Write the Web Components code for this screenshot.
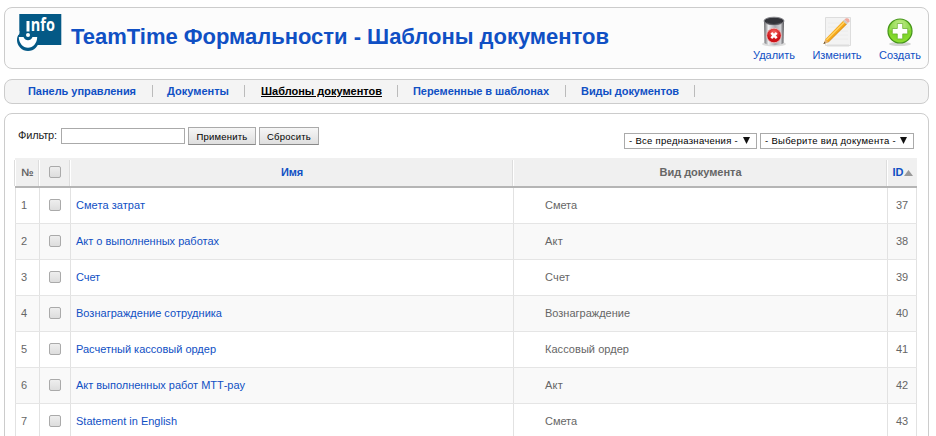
<!DOCTYPE html>
<html lang="ru"><head><meta charset="utf-8"><title>TeamTime</title>
<style>html,body{margin:0;height:436px;overflow:hidden;background:#fff}body{font:11px "Liberation Sans",Arial,sans-serif;color:#666}</style></head>
<body><team-app></team-app>
<script>
const define=(name,html,setup)=>customElements.define(name,class extends HTMLElement{
  connectedCallback(){if(this.shadowRoot)return;this.attachShadow({mode:'open'}).innerHTML=typeof html==='function'?html(this):html;if(setup)setup(this)}
});
// Single-line label whose tracking adapts to the width given in "w".
define('fit-label','<style>:host{display:block;white-space:nowrap;flex:none}span{display:inline-block;text-decoration:var(--line,none)}</style><span><slot></slot></span>',el=>{
  const w=+el.getAttribute('w'),s=el.shadowRoot.querySelector('span'),n=el.textContent.length;
  el.style.width=w+'px';
  s.style.letterSpacing=((w-s.getBoundingClientRect().width)/n)+'px';
});
define('info-logo',`<style>:host{display:block;flex:none;width:46px;height:38px}svg{display:block;overflow:visible}text{font:bold 17px "Open Sans","Noto Sans",sans-serif;fill:#fff}</style>
<svg width="46" height="38" viewBox="0 0 46 38"><path d="M3.300 0h42v31h-42z" fill="#045986"/><circle cx="12" cy="26" r="11" fill="#045986"/><path d="M0 17h3.300v3L0 23z" fill="#fcfcfc"/><path d="M2.800 23h4.700q1.500 3.200 4.500 3.200t4.500-3.200h4.700c0 6-4.200 10.800-9.200 10.800S2.800 29 2.800 23" fill="#fff"/><circle cx="12" cy="21" r="2" fill="#fff"/><path d="M10.500 7h3v10.500h-3z" fill="#fff"/><text transform="translate(14.800 16.500) scale(.85 1)">nfo</text></svg>`);
const icons={
trash:`<defs><linearGradient id="m"><stop stop-color="#656568"/><stop offset=".22" stop-color="#eeeef0"/><stop offset=".55" stop-color="#aaaab0"/><stop offset=".82" stop-color="#d4d4d8"/><stop offset="1" stop-color="#4f4f53"/></linearGradient><radialGradient id="r" cy=".3"><stop stop-color="#f86a64"/><stop offset="1" stop-color="#cc1218"/></radialGradient></defs><ellipse cx="16" cy="28" rx="12" ry="2.500" fill="#ddd"/><path d="M6 4h20l-.5 23c-3 3-16 3-19 0z" fill="url(#m)"/><ellipse cx="16" cy="5" rx="10" ry="3.800" fill="#33343a" stroke="#8b8b90"/><path d="M8 6q8 4 16 0-2 3-8 3t-8-3" fill="#56565c"/><circle cx="16" cy="19.500" r="7.300" fill="url(#r)" stroke="#f3c7c7" stroke-width=".8"/><path d="m13.300 16.800 5.400 5.400m0-5.400-5.400 5.400" stroke="#fff" stroke-width="2.500"/>`,
edit:`<path d="M4.500 1.500h25v28h-25z" fill="#f3f3f3" stroke="#ddd"/><path d="M6 28.500h22v2H6z" fill="#ddd"/><path d="M7 7h20M7 11h20M7 15h20M7 19h20M7 23h20" stroke="#ececec"/><path d="m2.500 28 2-5L22.500 4.500l3.500 3.500L7.500 26z" fill="#f6a81a"/><path d="m5.500 24 18-18" stroke="#ffd365" stroke-width="1.400"/><path d="m7 26.500 18.500-18.500" stroke="#c57915" stroke-width=".6"/><path d="m2.500 28 2-4.500 2.500 2.500z" fill="#dfb27d"/><path d="m2.500 28 .9-2 1.100 1z" fill="#333"/><path d="m22 5 1.500-1.500 3.500 3.500-1.500 1.500z" fill="#ccc"/><path d="m23.500 3.500 1.500-1.200q3.500-.8 3.500 3L27 7z" fill="#f0aa9e"/>`,
add:`<defs><radialGradient id="g" cy=".25" r=".75"><stop stop-color="#b9eb73"/><stop offset=".5" stop-color="#79d12a"/><stop offset="1" stop-color="#8ee031"/></radialGradient></defs><ellipse cx="16" cy="28" rx="11" ry="2" fill="#d3d5d2"/><circle cx="16" cy="15" r="12" fill="url(#g)" stroke="#45941b" stroke-width="1.200"/><path d="M5.500 14a10.500 10.500 0 0 1 21 0q-10 4-21 0" fill="#fff" opacity=".2"/><path d="M13.300 7.500h5.400v5h5v5.400h-5v5h-5.400v-5h-5v-5.400h5z" fill="#fff" stroke="#62ad27" stroke-width=".7"/>`};
define('tool-button',el=>`<style>:host{display:flex;flex-direction:column;align-items:center;color:#1050c4}svg{display:block}</style><svg width="32" height="32">${icons[el.getAttribute('icon')]}</svg><fit-label w="${el.getAttribute('w')}">${el.getAttribute('label')}</fit-label>`);
define('app-header',`<style>:host{display:flex;box-sizing:border-box;height:62px;border:1px solid #ccc;border-radius:8px;background:#fcfcfc;padding:6px 7px 0 11px}
.title{font:bold 22px/28px "Liberation Sans";color:#1050c4;margin:9px auto 0 9px}.tools{display:flex;gap:17.500px;padding-top:2px;line-height:14px}</style>
<info-logo></info-logo><fit-label class="title" w="538">TeamTime Формальности - Шаблоны документов</fit-label>
<div class="tools"><tool-button icon="trash" w="42" label="Удалить"></tool-button><tool-button icon="edit" w="49" label="Изменить"></tool-button><tool-button icon="add" w="42" label="Создать"></tool-button></div>`);
define('app-menu',`<style>:host{display:flex;align-items:center;box-sizing:border-box;height:25px;border:1px solid #ccc;border-radius:8px;background:#f4f4f4;padding:0 0 1px 23px;font-weight:bold;color:#1050c4}
i{width:1px;height:12px;background:#bbb;margin:0 15px 0 16px;flex:none}.on{color:#000;--line:underline}.on+i,.d+i{margin-right:15px;margin-left:15px}.p+i{margin-right:14px}.d+i{margin-right:16px}</style>
<fit-label class="p" w="108">Панель управления</fit-label><i></i><fit-label class="d" w="62">Документы</fit-label><i></i><fit-label class="on" w="121">Шаблоны документов</fit-label><i></i><fit-label w="136">Переменные в шаблонах</fit-label><i></i><fit-label class="d" w="98">Виды документов</fit-label><i></i>`);
define('push-button',`<style>:host{display:flex;align-items:center;justify-content:center;box-sizing:border-box;width:var(--w);height:18px;border:1px solid #aaa;border-bottom-color:#888;background:linear-gradient(#f6f6f6,#dedede);color:#000;font-size:9.500px;margin-left:3px}</style><slot></slot>`);
define('drop-down',`<style>:host{display:flex;align-items:center;justify-content:space-between;box-sizing:border-box;width:var(--w);height:16px;border:1px solid #aaa;background:#fff;color:#000;font-size:9.500px;padding:0 6px 1px 4px}svg{display:block}</style><slot></slot><svg width="7" height="7"><path d="M0 0h7L3.500 7z" fill="#111"/></svg>`);
define('filter-bar',`<style>:host{display:flex;height:44px;box-sizing:border-box;padding:13px 3px 0 3px;color:#222}.q{box-sizing:border-box;width:124px;height:16px;border:1px solid #aaa;margin:1px 0 0 4px;background:#fff}.f{margin-top:2px}.s{display:flex;gap:3px;margin:6px 0 0 auto}</style>
<fit-label class="f" w="39">Фильтр:</fit-label><div class="q"></div><push-button style="--w:68px"><fit-label w="51">Применить</fit-label></push-button><push-button style="--w:60px"><fit-label w="44">Сбросить</fit-label></push-button>
<div class="s"><drop-down style="--w:133px"><fit-label w="109">- Все предназначения -</fit-label></drop-down><drop-down style="--w:154px"><fit-label w="131">- Выберите вид документа -</fit-label></drop-down></div>`);
define('check-box',`<style>:host{display:block;box-sizing:border-box;width:12px;height:12px;border:1px solid #aaa;border-radius:2px;background:linear-gradient(#eee,#ddd)}</style>`);
const rows=[['Смета затрат',69,'Смета',32],['Акт о выполненных работах',143,'Акт',18],['Счет',24,'Счет',25],['Вознаграждение сотрудника',146,'Вознаграждение',85],['Расчетный кассовый ордер',140,'Кассовый ордер',84],['Акт выполненных работ МТТ-pay',169,'Акт',18],['Statement in English',101,'Смета',32]];
const grid='display:grid;grid-template-columns:24px 31px 443px 374px 30px;box-sizing:border-box;';
define('table-head',`<style>:host{${grid}height:30px;background:#f0f0f0;border-bottom:2px solid #b5b5b5;font-weight:bold}div{display:flex;align-items:center;justify-content:center;border-left:1px solid #fff;margin-top:2px;padding-bottom:2px;box-shadow:-1px 0 #ddd}div:first-child{box-shadow:none;border-color:#e5e5e5}.b{color:#1050c4}svg{flex:none;margin-top:2px}</style>
<div>№</div><div><check-box></check-box></div><div class="b"><fit-label w="22">Имя</fit-label></div><div><fit-label w="82">Вид документа</fit-label></div><div class="b"><fit-label w="11">ID</fit-label><svg width="9" height="6"><path d="M0 6h9L4.500 0z" fill="#999"/></svg></div>`);
define('table-row',el=>{const i=+el.getAttribute('index'),r=rows[i];return `<style>:host{${grid}height:36px;border-bottom:1px solid #e5e5e5;background:${i%2?'#f9f9f9':'#fff'}}div{display:flex;align-items:center;border-left:1px solid #e2e2e2;padding-bottom:1px}.n{padding-left:5px}.c{padding-left:9px}.t{padding-left:5px;color:#1050c4}.k{padding-left:31px}.i{justify-content:center;border-right:1px solid #e2e2e2}</style>
<div class="n">${i+1}</div><div class="c"><check-box></check-box></div><div class="t"><fit-label w="${r[1]}">${r[0]}</fit-label></div><div class="k"><fit-label w="${r[3]}">${r[2]}</fit-label></div><div class="i">${37+i}</div>`});
define('doc-panel',`<style>:host{display:block;box-sizing:border-box;height:340px;border:1px solid #ccc;border-radius:8px;padding:0 11px 0 10px;background:#fff}</style><filter-bar></filter-bar><table-head></table-head>${rows.map((_,i)=>`<table-row index="${i}"></table-row>`).join('')}`);
define('team-app',`<style>:host{display:flex;flex-direction:column;width:925px;margin-left:4px;padding-top:7px}app-header{margin-bottom:10px}app-menu{margin-bottom:9px}</style><app-header></app-header><app-menu></app-menu><doc-panel></doc-panel>`);
</script></body></html>
